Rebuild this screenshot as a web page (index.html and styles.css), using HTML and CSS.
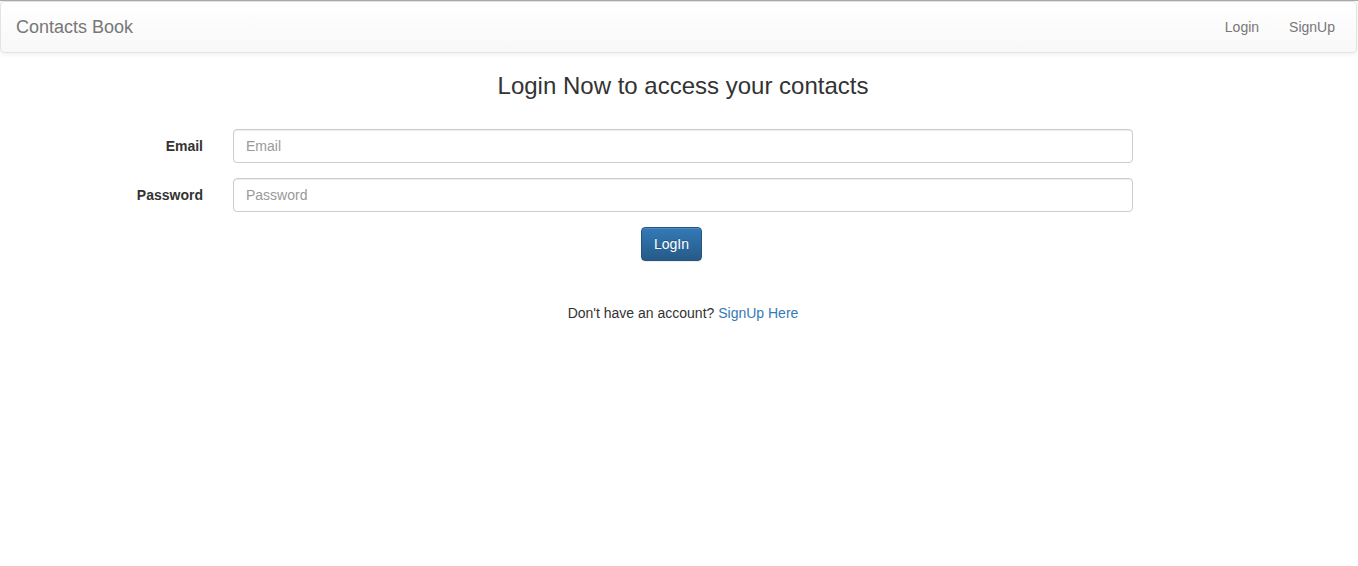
FILE: index.html
```html
<!DOCTYPE html>
<html lang="en">
<head>
<meta charset="utf-8">
<title>Contacts Book</title>
<link rel="stylesheet" href="styles.css">
</head>
<body>
<nav class="navbar">
  <a class="brand" href="#">Contacts Book</a>
  <ul class="nav-links">
    <li><a href="#">Login</a></li>
    <li><a href="#">SignUp</a></li>
  </ul>
</nav>
<main class="main">
  <h3 class="title">Login Now to access your contacts</h3>
  <form class="login-form">
    <label class="form-label" for="email">Email</label>
    <input class="form-input" id="email" type="email" placeholder="Email">
    <label class="form-label" for="password">Password</label>
    <input class="form-input" id="password" type="password" placeholder="Password">
    <div class="form-actions">
      <button class="btn-primary" type="button">LogIn</button>
    </div>
  </form>
  <p class="signup-line">Don't have an account? <a href="#">SignUp Here</a></p>
</main>
</body>
</html>
```
FILE: styles.css
```css
* { box-sizing: border-box; }
html, body { margin: 0; padding: 0; }
body {
  font-family: "Liberation Sans", Arial, Helvetica, sans-serif;
  font-size: 14px;
  line-height: 20px;
  color: #333;
  background: #fff;
  border-top: 1px solid #a9a9a9;
}
a { text-decoration: none; }

.navbar {
  display: flex;
  justify-content: space-between;
  align-items: stretch;
  height: 52px;
  margin: 0 1px 20px 0;
  border: 1px solid #e3e3e3;
  border-radius: 4px;
  background: linear-gradient(to bottom, #fff 0%, #f8f8f8 100%);
  box-shadow: inset 0 1px 0 rgba(255,255,255,.15), 0 1px 5px rgba(0,0,0,.075);
}
.brand {
  padding: 15px 15px;
  font-size: 18px;
  line-height: 20px;
  color: #777;
}
.nav-links {
  display: flex;
  list-style: none;
  margin: 0 6px 0 0;
  padding: 0;
}
.nav-links a {
  display: block;
  padding: 15px 15px;
  line-height: 20px;
  color: #777;
}

.main {
  padding-left: 8px;
  text-align: center;
}
.title {
  margin: 1px 0 30px;
  font-size: 24px;
  font-weight: 500;
  line-height: 26px;
  color: #333;
}

.login-form {
  display: grid;
  grid-template-columns: 195px 900px;
  column-gap: 30px;
  row-gap: 15px;
  text-align: left;
}
.form-label {
  padding-top: 7px;
  font-weight: bold;
  text-align: right;
}
.form-input {
  height: 34px;
  padding: 6px 12px;
  font-family: inherit;
  font-size: 14px;
  line-height: 20px;
  color: #555;
  border: 1px solid #ccc;
  border-radius: 4px;
  box-shadow: inset 0 1px 1px rgba(0,0,0,.075);
  background: #fff;
}
.form-input::placeholder { color: #999; }
.form-actions {
  grid-column: 2;
  padding-left: 408px;
}
.btn-primary {
  height: 34px;
  padding: 6px 12px;
  font-family: inherit;
  font-size: 14px;
  line-height: 20px;
  color: #fff;
  border: 1px solid #245580;
  border-radius: 4px;
  background: linear-gradient(to bottom, #337ab7 0%, #265a88 100%);
  text-shadow: 0 -1px 0 rgba(0,0,0,.2);
  box-shadow: inset 0 1px 0 rgba(255,255,255,.15), 0 1px 1px rgba(0,0,0,.075);
}

.signup-line {
  margin: 42px 0 0;
  line-height: 20px;
}
.signup-line a { color: #337ab7; }
```
